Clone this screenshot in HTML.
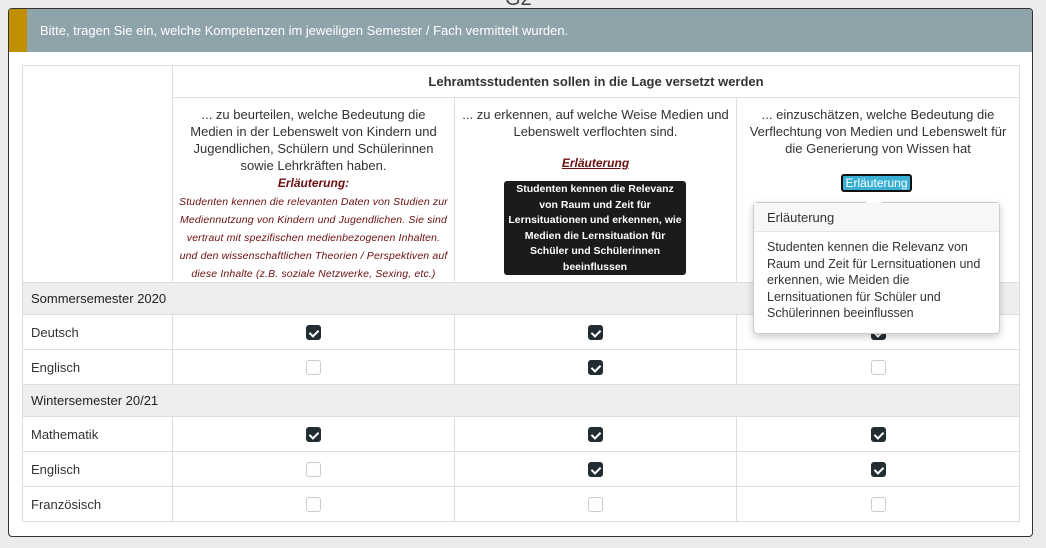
<!DOCTYPE html>
<html><head><meta charset="utf-8"><style>
*{box-sizing:border-box;margin:0;padding:0}
body{width:1046px;height:548px;overflow:hidden;background:#ececec;font-family:"Liberation Sans",sans-serif;font-size:13px;color:#333;position:relative}
.g2{position:absolute;left:505px;top:-12px;font-size:20px;color:#444}
.card{position:absolute;left:8px;top:8px;width:1025px;height:529px;background:#fff;border:1px solid #333;border-radius:4px;overflow:hidden}
.hd{position:absolute;left:0;top:0;width:100%;height:43px;background:#8fa3ab;color:#fff;padding:14px 0 0 31px;font-size:13px}
.hd:before{content:"";position:absolute;left:0;top:0;width:18px;height:43px;background:#c08f00}
table{position:absolute;left:13px;top:56px;border-collapse:collapse;width:997px;table-layout:fixed}
td{border:1px solid #ddd;vertical-align:top}
.c1{width:150px}.cx{width:282px}
.h1{height:32px;text-align:center;font-weight:bold;vertical-align:middle;color:#333}
.h2{height:185px;text-align:center;padding:0 6px;line-height:17px}
.h2>div.in{height:184px;overflow:hidden;padding-top:8px}
.sem td{background:#eee;height:32px;vertical-align:middle;padding-left:8px;color:#222}
.r td{height:35px;vertical-align:middle}
.r td.l{padding-left:8px}
.cb{display:block;margin:0 auto;width:15px;height:15px;border:1px solid #ccc;border-radius:3px;background:#fff}
.ck{background:#222d33;border-color:#222d33;position:relative}
.ck:after{content:"";position:absolute;left:4px;top:2px;width:4px;height:7px;border:solid #fff;border-width:0 2px 2px 0;transform:rotate(45deg)}
.er{color:#6b0f0f;font-style:italic;font-size:10.5px;line-height:18px;letter-spacing:0.15px}
.er b{font-size:12px;letter-spacing:0}
.tt{position:absolute;left:504px;top:181px;width:182px;height:94px;background:#1b1b1b;border-radius:3px;color:#fff;font-size:10.5px;font-weight:bold;text-align:center;line-height:15.5px;padding:1px 4px;overflow:hidden}
.badge{position:absolute;left:841px;top:174px;width:71px;height:18px;background:#3ab0d4;border:2px solid #111;border-radius:3px;color:#fff;font-size:12px;text-align:center;line-height:14px}
.pop{position:absolute;left:753px;top:202px;width:247px;height:132px;background:#fff;border:1px solid #ccc;border-radius:4px;box-shadow:0 3px 8px rgba(0,0,0,.2)}
.pop .t{height:29px;background:#f7f7f7;border-bottom:1px solid #e6e6e6;padding:7px 13px;font-size:13px}
.pop .b{padding:7px 13px;font-size:12.5px;line-height:16.5px}
.pop:before{content:"";position:absolute;left:112px;top:-8px;border:8px solid transparent;border-top:0;border-bottom-color:#fff}
</style></head><body>
<div class="g2">G2</div>
<div class="card">
<div class="hd">Bitte, tragen Sie ein, welche Kompetenzen im jeweiligen Semester / Fach vermittelt wurden.</div>
<table>
<colgroup><col style="width:150px"><col style="width:282px"><col style="width:282px"><col style="width:283px"></colgroup>
<tr><td class="c1" rowspan="2"></td><td class="h1" colspan="3">Lehramtsstudenten sollen in die Lage versetzt werden</td></tr>
<tr><td class="h2"><div class="in">... zu beurteilen, welche Bedeutung die Medien in der Lebenswelt von Kindern und Jugendlichen, Schülern und Schülerinnen sowie Lehrkräften haben.<div class="er"><b>Erläuterung:</b><br>Studenten kennen die relevanten Daten von Studien zur Mediennutzung von Kindern und Jugendlichen. Sie sind vertraut mit spezifischen medienbezogenen Inhalten. und den wissenschaftlichen Theorien / Perspektiven auf diese Inhalte (z.B. soziale Netzwerke, Sexing, etc.)</div></div></td>
<td class="h2"><div class="in">... zu erkennen, auf welche Weise Medien und Lebenswelt verflochten sind.<div class="er" style="margin-top:14px"><b style="text-decoration:underline">Erläuterung</b></div></div></td>
<td class="h2"><div class="in">... einzuschätzen, welche Bedeutung die Verflechtung von Medien und Lebenswelt für die Generierung von Wissen hat</div></td></tr>
<tr class="sem"><td colspan="4">Sommersemester 2020</td></tr>
<tr class="r"><td class="l">Deutsch</td><td><i class="cb ck"></i></td><td><i class="cb ck"></i></td><td><i class="cb ck"></i></td></tr>
<tr class="r"><td class="l">Englisch</td><td><i class="cb"></i></td><td><i class="cb ck"></i></td><td><i class="cb"></i></td></tr>
<tr class="sem"><td colspan="4">Wintersemester 20/21</td></tr>
<tr class="r"><td class="l">Mathematik</td><td><i class="cb ck"></i></td><td><i class="cb ck"></i></td><td><i class="cb ck"></i></td></tr>
<tr class="r"><td class="l">Englisch</td><td><i class="cb"></i></td><td><i class="cb ck"></i></td><td><i class="cb ck"></i></td></tr>
<tr class="r"><td class="l">Französisch</td><td><i class="cb"></i></td><td><i class="cb"></i></td><td><i class="cb"></i></td></tr>
</table>
</div>
<div class="tt">Studenten kennen die Relevanz von Raum und Zeit für Lernsituationen und erkennen, wie Medien die Lernsituation für Schüler und Schülerinnen beeinflussen</div>
<div class="badge">Erläuterung</div>
<div class="pop"><div class="t">Erläuterung</div><div class="b">Studenten kennen die Relevanz von Raum und Zeit für Lernsituationen und erkennen, wie Meiden die Lernsituationen für Schüler und Schülerinnen beeinflussen</div></div>
</body></html>
